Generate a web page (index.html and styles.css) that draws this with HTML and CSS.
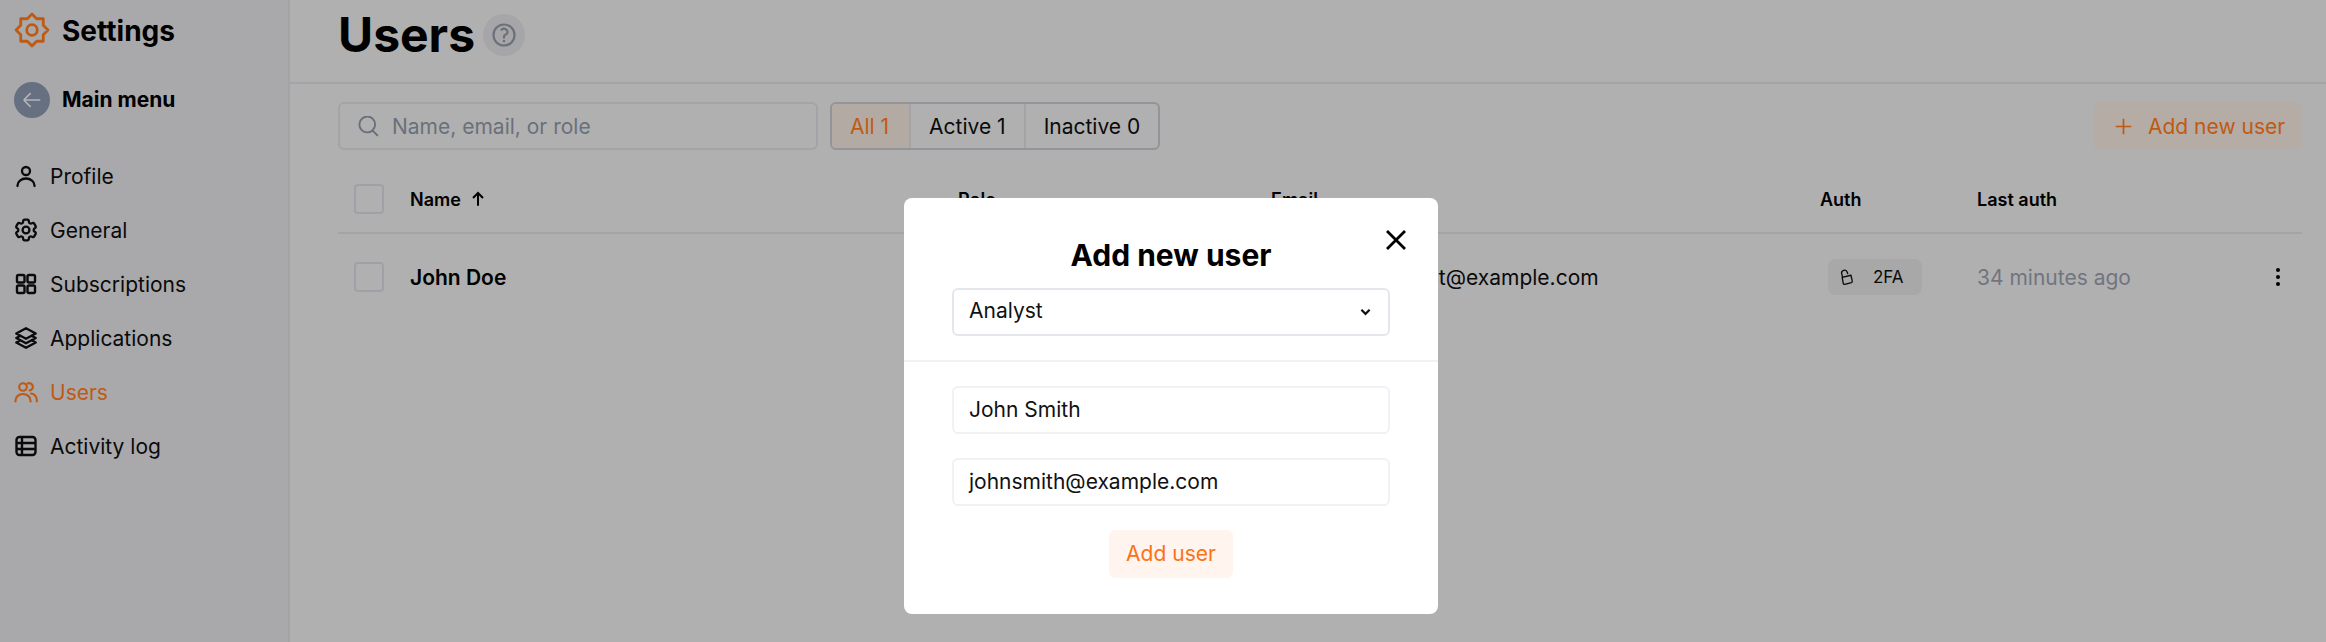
FILE: index.html
```html
<!DOCTYPE html>
<html lang="en">
<head>
<meta charset="utf-8">
<title>Users</title>
<link rel="stylesheet" href="styles.css">
</head>
<body>
<div class="app">
  <aside class="sidebar">
    <div class="brand">
      <svg class="brand-icon" viewBox="-1 -1 26 26" fill="none" stroke="currentColor" stroke-width="2" stroke-linejoin="round"><path d="M12 .5 15.37 3.87 20.13 3.87 20.13 8.63 23.5 12 20.13 15.37 20.13 20.13 15.37 20.13 12 23.5 8.63 20.13 3.87 20.13 3.87 15.37 .5 12 3.87 8.63 3.87 3.87 8.63 3.87Z"/><circle cx="12" cy="12" r="3.8"/></svg>
      <span class="brand-name">Settings</span>
    </div>
    <div class="back">
      <span class="back-circle"><svg viewBox="0 0 24 24" fill="none" stroke="currentColor" stroke-width="1.8"><path d="M10.5 19.5 3 12m0 0 7.5-7.5M3 12h18"/></svg></span>
      <span class="back-label">Main menu</span>
    </div>
    <nav class="nav">
      <a class="nav-item"><svg class="nav-icon" viewBox="0 0 24 24" fill="none" stroke="currentColor" stroke-width="2.3" stroke-linecap="round"><circle cx="12" cy="7" r="4"/><path d="M3.5 22v-.5a8.500 7 0 0 1 17 0v.5"/></svg>Profile</a>
      <a class="nav-item"><svg class="nav-icon" viewBox="1.5 1.5 21 21" fill="none" stroke="currentColor" stroke-width="2"><path d="M9.594 3.94c.09-.542.56-.94 1.11-.94h2.593c.55 0 1.02.398 1.11.94l.213 1.281c.063.374.313.686.645.87.074.04.147.083.22.127.325.196.72.257 1.075.124l1.217-.456a1.125 1.125 0 0 1 1.37.49l1.296 2.247a1.125 1.125 0 0 1-.26 1.431l-1.003.827c-.293.241-.438.613-.43.992a7.723 7.723 0 0 1 0 .255c-.008.378.137.75.43.991l1.004.827c.424.35.534.955.26 1.43l-1.298 2.247a1.125 1.125 0 0 1-1.369.491l-1.217-.456c-.355-.133-.75-.072-1.076.124a6.47 6.47 0 0 1-.22.128c-.331.183-.581.495-.644.869l-.213 1.281c-.09.543-.56.94-1.11.94h-2.594c-.55 0-1.019-.398-1.11-.94l-.213-1.281c-.062-.374-.312-.686-.644-.87a6.52 6.52 0 0 1-.22-.127c-.325-.196-.72-.257-1.076-.124l-1.217.456a1.125 1.125 0 0 1-1.369-.49l-1.297-2.247a1.125 1.125 0 0 1 .26-1.431l1.004-.827c.292-.24.437-.613.43-.991a6.932 6.932 0 0 1 0-.255c.007-.38-.138-.751-.43-.992l-1.004-.827a1.125 1.125 0 0 1-.26-1.43l1.297-2.247a1.125 1.125 0 0 1 1.37-.491l1.216.456c.356.133.751.072 1.076-.124.072-.044.146-.086.22-.128.332-.183.582-.495.644-.869l.214-1.28Z"/><path d="M15 12a3 3 0 1 1-6 0 3 3 0 0 1 6 0Z"/></svg>General</a>
      <a class="nav-item"><svg class="nav-icon" viewBox="0 0 24 24" fill="none" stroke="currentColor" stroke-width="2.4"><rect x="3" y="3" width="7.500" height="7.500" rx="1.500"/><rect x="13.500" y="3" width="7.500" height="7.500" rx="1.500"/><rect x="3" y="13.500" width="7.500" height="7.500" rx="1.500"/><rect x="13.500" y="13.500" width="7.500" height="7.500" rx="1.500"/></svg>Subscriptions</a>
      <a class="nav-item"><svg class="nav-icon" viewBox="0 0 24 24" fill="none" stroke="currentColor" stroke-width="2.3" stroke-linejoin="round" stroke-linecap="round"><path d="M6.429 9.75 2.25 12l4.179 2.25m0-4.5 5.571 3 5.571-3m-11.142 0L2.25 7.5 12 2.25l9.750 5.250-4.179 2.250m0 0L21.750 12l-4.179 2.250m0 0 4.179 2.250L12 21.750 2.250 16.500l4.179-2.250m11.142 0-5.571 3-5.571-3"/></svg>Applications</a>
      <a class="nav-item nav-item-active"><svg class="nav-icon" viewBox="0 0 24 24" fill="none" stroke="currentColor" stroke-width="2.1" stroke-linecap="round"><circle cx="9" cy="7" r="3.800"/><path d="M13.500 3.500a3.700 3.700 0 1 1 2 7"/><path d="M1.500 21.500v-1a7.500 6.500 0 0 1 15 0v1"/><path d="M17 13.500a6.500 6.500 0 0 1 5.800 7v1"/></svg>Users</a>
      <a class="nav-item"><svg class="nav-icon" viewBox="0 0 24 24" fill="none" stroke="currentColor" stroke-width="2.4"><rect x="2.500" y="3" width="19" height="18" rx="3"/><path d="M2.500 9h19M2.500 15h19M8 3v18"/></svg>Activity log</a>
    </nav>
  </aside>
  <main class="main">
    <header class="page-head">
      <h1 class="page-title">Users</h1>
      <span class="help"><svg viewBox="0 0 24 24" fill="none" stroke="currentColor" stroke-width="1.900" stroke-linecap="round"><path d="M9.879 7.519c1.171-1.025 3.071-1.025 4.242 0 1.172 1.025 1.172 2.687 0 3.712-.203.179-.43.326-.67.442-.745.361-1.45.999-1.45 1.827v.75M21 12a9 9 0 1 1-18 0 9 9 0 0 1 18 0Zm-9 5.250h.008v.008H12v-.008Z"/></svg></span>
    </header>
    <div class="content">
      <div class="toolbar">
        <div class="search">
          <svg class="search-icon" viewBox="0 0 24 24" fill="none" stroke="currentColor" stroke-width="2.2" stroke-linecap="round"><path d="m22 22-5.500-5.500m0 0A9 9 0 1 0 3.800 3.800a9 9 0 0 0 12.700 12.700Z"/></svg>
          <span>Name, email, or role</span>
        </div>
        <div class="segments">
          <span class="segment segment-on">All 1</span>
          <span class="segment">Active 1</span>
          <span class="segment">Inactive 0</span>
        </div>
        <button class="add-btn"><svg viewBox="0 0 24 24" fill="none" stroke="currentColor" stroke-width="2.4"><path d="M12 1v22M1 12h22"/></svg>Add new user</button>
      </div>
      <div class="table-row table-head">
        <span class="check"></span>
        <span class="name-head">Name <svg viewBox="0 0 24 24" fill="none" stroke="currentColor" stroke-width="3"><path d="M4.500 10.500 12 3l7.500 7.500M12 3v19"/></svg></span>
        <span>Role</span>
        <span>Email</span>
        <span>Auth</span>
        <span>Last auth</span>
      </div>
      <div class="table-row table-body">
        <span class="check"></span>
        <span class="user-name">John Doe</span>
        <span>Analyst</span>
        <span>john-doe+analyst@example.com</span>
        <span class="badge"><svg viewBox="0 0 16 18" fill="none" stroke="currentColor" stroke-width="1.500" stroke-linejoin="round"><path d="M2.500 9.500l10-2.500 1.500 6.500a1.500 1.500 0 0 1-1 1.800l-7.500 2a1.500 1.500 0 0 1-1.800-1.100Z"/><path d="M3 9.500 2 5.500a3.300 3.300 0 0 1 6.300-2l.7 2.200"/></svg>2FA</span>
        <span class="last-auth">34 minutes ago<svg class="dots" viewBox="0 0 6 20" fill="currentColor"><circle cx="3" cy="3" r="2"/><circle cx="3" cy="10" r="2"/><circle cx="3" cy="17" r="2"/></svg></span>
      </div>
    </div>
  </main>
  <section class="modal">
    <svg class="modal-close" viewBox="0 0 20 20" fill="none" stroke="currentColor" stroke-width="2.800"><path d="M1 1l18 18M19 1 1 19"/></svg>
    <h2 class="modal-title">Add new user</h2>
    <div class="field field-select"><span>Analyst</span><svg viewBox="0 0 12 8" fill="none" stroke="currentColor" stroke-width="2.400"><path d="M1.500 1.500 6 6l4.500-4.500"/></svg></div>
    <hr class="modal-rule">
    <div class="field">John Smith</div>
    <div class="field">johnsmith@example.com</div>
    <button class="modal-submit">Add user</button>
  </section>
</div>
</body>
</html>
```
FILE: styles.css
```css
* { box-sizing: border-box; }
html, body { margin: 0; height: 642px; overflow: hidden; }
body { font-family: Inter, "Liberation Sans", sans-serif; font-size: 21px; color: #0a0a0a; background: #b0b0b0; }
svg { display: block; flex: none; }
.app { display: flex; height: 642px; position: relative; overflow: hidden; }

.sidebar { width: 290px; flex: none; background: #a9a9ac; border-right: 2px solid #a3a3a8; padding: 13px 0 0 14px; }
.brand { display: flex; align-items: center; height: 34px; }
.brand-icon { width: 36px; height: 36px; color: #bf5a14; margin-right: 12px; }
.brand-name { font-size: 28px; font-weight: 700; color: #000; position: relative; top: 1px; }
.back { display: flex; align-items: center; margin-top: 35px; }
.back-circle { width: 36px; height: 36px; border-radius: 50%; background: #677080; color: #b4b4b8; display: flex; align-items: center; justify-content: center; margin-right: 12px; }
.back-circle svg { width: 22px; height: 22px; }
.back-label { font-size: 21px; font-weight: 700; color: #000; position: relative; top: -1px; }
.nav { display: flex; flex-direction: column; margin-top: 31px; }
.nav-item { display: flex; align-items: center; height: 54px; gap: 12px; }
.nav-item-active { color: #bf5a14; }
.nav-icon { width: 24px; height: 24px; }

.main { flex: 1; min-width: 0; }
.page-head { height: 84px; border-bottom: 2px solid #a3a3a8; display: flex; align-items: flex-start; padding: 14px 0 0 48px; gap: 8px; }
.page-title { margin: -6px 0 0; font-size: 48px; line-height: 54px; font-weight: 700; color: #000; }
.help { width: 42px; height: 42px; border-radius: 50%; background: #a6a6a8; color: #6b717c; display: flex; align-items: center; justify-content: center; }
.help svg { width: 28px; height: 28px; }
.content { padding: 18px 24px 0 48px; }

.toolbar { display: flex; align-items: stretch; height: 48px; }
.search { width: 480px; border: 2px solid #a3a3a8; border-radius: 6px; display: flex; align-items: center; gap: 13px; padding-left: 18px; color: #6a707b; }
.search-icon { width: 21px; height: 21px; }
.segments { display: flex; margin-left: 12px; border: 2px solid #93939a; border-radius: 6px; overflow: hidden; }
.segment { display: flex; align-items: center; padding: 0 18px; border-left: 2px solid #a3a3a8; }
.segment:first-child { border-left: 0; padding-right: 20px; }
.segment-on { background: #b3aaa4; color: #bf5a14; }
.add-btn { margin-left: auto; width: 208px; border: 0; border-radius: 6px; background: #b5aca6; color: #bf5a14; font: inherit; display: flex; align-items: center; gap: 16px; padding: 0 0 0 21px; }
.add-btn svg { width: 17px; height: 17px; }

.table-row { display: grid; grid-template-columns: 72px 548px 313px 549px 157px 1fr; align-items: center; }
.table-head { margin-top: 34px; height: 50px; padding-bottom: 20px; border-bottom: 2px solid #a3a3a8; font-size: 18px; font-weight: 600; color: #000; }
.table-body { height: 86px; }
.check { width: 30px; height: 30px; margin-left: 16px; border: 2px solid #a0a0a6; border-radius: 4px; }
.name-head { display: flex; align-items: center; gap: 9px; }
.name-head svg { width: 16px; height: 16px; }
.user-name { font-weight: 600; color: #000; }
.badge { justify-self: start; margin-left: 8px; width: 94px; height: 36px; border-radius: 8px; background: #a8a8a8; display: flex; align-items: center; gap: 19px; padding-left: 12px; font-size: 17px; }
.badge svg { width: 14px; height: 18px; }
.last-auth { display: flex; align-items: center; justify-content: space-between; color: #70757f; padding-right: 21px; }
.dots { width: 6px; height: 20px; color: #000; }

.modal { position: absolute; left: 904px; top: 198px; width: 534px; height: 416px; background: #fff; border-radius: 8px; display: flex; flex-direction: column; align-items: center; padding-top: 39px; }
.modal-close { position: absolute; right: 32px; top: 32px; width: 20px; height: 20px; color: #000; }
.modal-title { margin: 0; font-size: 30px; line-height: 36px; font-weight: 700; color: #000; }
.field { width: 438px; height: 48px; border: 2px solid #f0f1f5; border-radius: 6px; padding: 0 0 2px 15px; display: flex; align-items: center; margin-bottom: 24px; color: #111; }
.field-select { margin: 15px 0 0; border-color: #e5e6ec; justify-content: space-between; padding-right: 17px; padding-bottom: 3px; }
.field-select svg { width: 11px; height: 8px; position: relative; top: 1px; }
.modal-rule { width: 100%; margin: 24px 0; border: 0; border-top: 2px solid #f0f1f5; }
.modal-submit { margin-top: 0; width: 124px; height: 48px; border: 0; border-radius: 6px; background: #fff4ee; color: #f97316; font: inherit; padding: 0 0 2px; }
```
